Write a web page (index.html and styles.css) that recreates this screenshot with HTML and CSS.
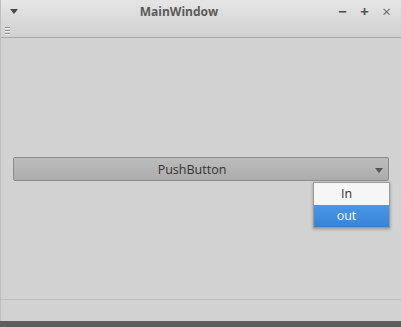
FILE: index.html
```html
<!DOCTYPE html>
<html>
<head>
  <title>MainWindow</title>
  <link rel="stylesheet" href="styles.css">
</head>
<body>
  <div class="window">
    <div class="titlebar">
      <span class="menu-arrow"></span>
      <span class="title">MainWindow</span>
      <div class="controls">
        <span class="ctl">&minus;</span>
        <span class="ctl">+</span>
        <span class="ctl close">&times;</span>
      </div>
    </div>
    <div class="toolbar">
      <div class="handle"><i></i><i></i><i></i></div>
    </div>
    <div class="central">
      <div class="combo">
        <span class="combo-text">PushButton</span>
        <span class="combo-arrow"></span>
        <div class="popup">
          <div class="item">In</div>
          <div class="item selected">out</div>
        </div>
      </div>
    </div>
    <div class="statusbar"></div>
  </div>
</body>
</html>
```
FILE: styles.css
```css
html, body {
  margin: 0;
  padding: 0;
}
body {
  width: 401px;
  height: 327px;
  background: #5e5e5e;
  font-family: "Open Sans", "DejaVu Sans", sans-serif;
  overflow: hidden;
}
.window {
  height: 321px;
  display: flex;
  flex-direction: column;
  background: #d2d2d2;
  border-left: 1px solid #bdbdbd;
  box-sizing: border-box;
}
.titlebar {
  height: 22px;
  display: flex;
  align-items: center;
  background: linear-gradient(#e6e6e6, #d8d8d8);
}
.menu-arrow {
  margin-left: 9px;
  width: 0;
  height: 0;
  border-left: 4px solid transparent;
  border-right: 4px solid transparent;
  border-top: 5px solid #4a4a4a;
}
.title {
  flex: 1;
  text-align: center;
  font-size: 12px;
  font-weight: bold;
  color: #5a5a5a;
  padding-left: 4px;
}
.controls {
  display: flex;
  gap: 9px;
  margin-right: 8px;
}
.ctl {
  width: 13px;
  text-align: center;
  font-size: 15px;
  font-weight: bold;
  color: #555;
  line-height: 14px;
}
.ctl.close {
  font-weight: normal;
  color: #666;
}
.toolbar {
  height: 15px;
  border-bottom: 1px solid #a9a9a9;
  background: linear-gradient(#d8d8d8, #d2d2d2);
  display: flex;
  align-items: center;
}
.handle {
  margin-left: 4px;
  display: flex;
  flex-direction: column;
  gap: 1px;
  padding-top: 3px;
}
.handle i {
  display: block;
  width: 5px;
  height: 1px;
  background: #8f8f8f;
  border-bottom: 1px solid #f0f0f0;
}
.central {
  flex: 1;
  padding: 119px 12px 0 12px;
  background: #d2d2d2;
}
.combo {
  position: relative;
  height: 22px;
  padding-right: 18px;
  border: 1px solid #8c8c8c;
  border-radius: 2px;
  background: linear-gradient(#bcbcbc, #acacac);
  display: flex;
  align-items: center;
  justify-content: center;
}
.combo-text {
  font-size: 12.5px;
  color: #333;
}
.combo-arrow {
  position: absolute;
  right: 5px;
  top: 10px;
  width: 0;
  height: 0;
  border-left: 4px solid transparent;
  border-right: 4px solid transparent;
  border-top: 5px solid #555;
}
.popup {
  position: absolute;
  top: 24px;
  right: -2px;
  width: 75px;
  border: 1px solid #9a9a9a;
  box-shadow: 0 1px 3px rgba(0, 0, 0, 0.3);
  background: #f6f6f6;
}
.item {
  height: 22px;
  line-height: 22px;
  padding-right: 10px;
  text-align: center;
  font-size: 12.5px;
  color: #333;
}
.item.selected {
  background: linear-gradient(#4a97e6, #3684d6);
  color: #fff;
}
.statusbar {
  height: 21px;
  border-top: 1px solid #bcbcbc;
  background: #d2d2d2;
}
```
